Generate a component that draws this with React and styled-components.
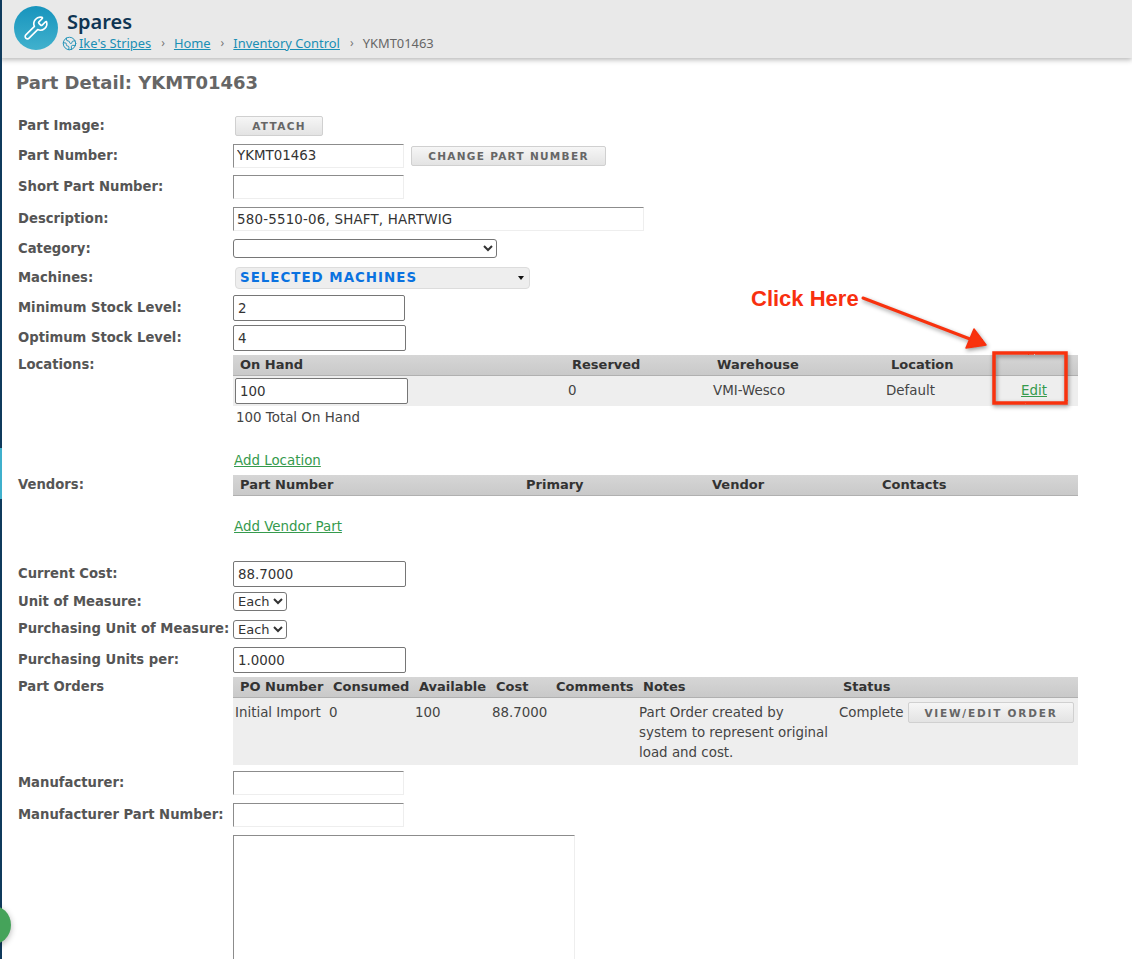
import React from "react";
import styled, { createGlobalStyle } from "styled-components";
import { Wrench, Earth } from "lucide-react";

const Global = createGlobalStyle`
  html, body { margin: 0; padding: 0; background: #fff; overflow: hidden; height: 959px; }
  #root { height: 959px; overflow: hidden; position: relative; }
`;

const Page = styled.div`
  position: relative;
  width: 1132px;
  height: 959px;
  overflow: hidden;
  font-family: "DejaVu Sans", Verdana, sans-serif;
  font-size: 13.4px;
  color: #444;
`;
const EdgeBar = styled.div`
  position: absolute;
  left: 0; top: 0; bottom: 0;
  width: 2px;
  z-index: 5;
  background: linear-gradient(to bottom, #0f3a5c 0, #0f3a5c 448px, #3fb0cc 448px, #3fb0cc 499px, #0f3a5c 499px);
`;
const HelpBubble = styled.div`
  position: absolute;
  left: -29px; top: 905px;
  width: 40px; height: 40px;
  border-radius: 50%;
  background: #45a35a;
  box-shadow: 0 2px 6px rgba(0,0,0,.3);
  z-index: 6;
`;
const Header = styled.header`
  height: 58px;
  background: #e9e9e9;
  box-shadow: 0 2px 5px rgba(0,0,0,.28);
  display: flex;
  align-items: flex-start;
  padding: 6px 0 0 14px;
  box-sizing: border-box;
  font-family: "Noto Sans", sans-serif;
`;
const Logo = styled.div`
  width: 44px; height: 44px;
  border-radius: 50%;
  background: linear-gradient(to bottom, #1794bd, #41b1cd);
  color: #fff;
  display: flex;
  align-items: center;
  justify-content: center;
  flex: none;
`;
const HeaderText = styled.div`
  margin-left: 4px;
  display: flex;
  flex-direction: column;
`;
const AppName = styled.div`
  font-size: 20px;
  line-height: 22px;
  margin: 5px 0 0 5px;
  font-weight: 600;
  color: #0f3553;
`;
const Crumbs = styled.nav`
  display: flex;
  align-items: center;
  font-size: 12.9px;
  line-height: 18px;
  margin-top: 1px;
  color: #666;
  svg { color: #1a8fb5; flex: none; margin-right: 2px; }
`;
const CrumbLink = styled.a`
  color: #1a8fb5;
  text-decoration: underline;
`;
const CrumbSep = styled.span`
  margin: 0 9px 0 10px;
  color: #777;
  font-size: 12px;
`;
const Title = styled.h1`
  margin: 14px 0 0 16px;
  font-size: 18px;
  line-height: 22px;
  font-weight: 700;
  color: #666;
`;
const Form = styled.div`
  margin-top: 18px;
  padding-left: 18px;
  width: 1060px;
`;
const Row = styled.div`
  display: grid;
  grid-template-columns: 215px 1fr;
  height: ${p => p.$h}px;
  align-items: ${p => p.$top ? "start" : "center"};
`;
const Label = styled.div`
  font-weight: 700;
  font-size: 13.2px;
  color: #555;
  white-space: nowrap;
  ${p => p.$pad ? `padding-top: ${p.$pad}px;` : "padding-bottom: 1px;"}
`;
const Field = styled.div`
  display: flex;
  align-items: center;
  gap: 7px;
`;
const Input = styled.input`
  box-sizing: border-box;
  width: ${p => p.$w}px;
  height: 26px;
  font: 13.4px "DejaVu Sans", sans-serif;
  letter-spacing: ${p => p.$ls || 0}px;
  color: #333;
  padding: 0 4px;
  margin: 0;
  outline: none;
  background: #fff;
  ${p => p.$soft
    ? `height: 24px; padding: 0 3px; border: 1px solid; border-color: #8c8c8c #eee #eee #8c8c8c;`
    : `border: 1px solid #767676; border-radius: 2px;`}
`;
const Textarea = styled.textarea`
  box-sizing: border-box;
  display: block;
  width: 342px;
  height: 200px;
  border: 1px solid;
  border-color: #8c8c8c #eee #eee #8c8c8c;
  outline: none;
  resize: none;
  margin: 4px 0 0;
`;
const Select = styled.select`
  box-sizing: border-box;
  width: ${p => p.$w}px;
  height: 19px;
  font: 13px "DejaVu Sans", sans-serif;
  color: #333;
  background: #fff;
  border: 1px solid #767676;
  border-radius: 3px;
  padding: 0;
  margin: 0;
`;
const Button = styled.button`
  box-sizing: border-box;
  width: ${p => p.$w}px;
  height: ${p => p.$bh || 20}px;
  margin: 0 0 0 ${p => p.$ml || 0}px;
  padding: 0;
  background: linear-gradient(to bottom, #f6f6f6, #e3e3e3);
  border: 1px solid #d0d0d0;
  border-radius: 2px;
  color: #666;
  font: 700 10.5px "DejaVu Sans", sans-serif;
  letter-spacing: ${p => p.$ls || 1.3}px;
  text-transform: uppercase;
  white-space: nowrap;
`;
const MachinePicker = styled.div`
  box-sizing: border-box;
  width: 295px;
  height: 22px;
  margin-left: 2px;
  background: #eeeeee;
  border: 1px solid #dcdcdc;
  border-radius: 4px;
  display: flex;
  align-items: center;
  justify-content: space-between;
  padding: 0 5px 0 4px;
  color: #0a72e0;
  font-weight: 700;
  font-size: 13.4px;
  letter-spacing: 1px;
`;
const Caret = styled.span`
  width: 0; height: 0;
  border-left: 3px solid transparent;
  border-right: 3px solid transparent;
  border-top: 4px solid #111;
`;
const TableHead = styled.div`
  display: grid;
  grid-template-columns: ${p => p.$cols};
  height: 21px;
  width: 845px;
  box-sizing: border-box;
  border-bottom: 1px solid #b0b0b0;
  background: linear-gradient(to bottom, #d6d6d6, #c9c9c9);
  align-items: center;
  font-weight: 700;
  font-size: 13px;
  color: #333;
  white-space: nowrap;
`;
const HeadCell = styled.div`
  padding: 0 0 2px ${p => p.$pl || 7}px;
`;
const TableRow = styled.div`
  display: grid;
  grid-template-columns: ${p => p.$cols};
  width: 845px;
  height: ${p => p.$h}px;
  background: #eeeeee;
  align-items: ${p => p.$top ? "start" : "center"};
  color: #444;
  line-height: 20px;
`;
const Cell = styled.div`
  padding-left: 2px;
  ${p => p.$center ? "text-align: center; padding-left: 0;" : ""}
  ${p => p.$pt ? `padding-top: ${p.$pt}px;` : ""}
  ${p => p.$wrap ? "white-space: normal; padding-right: 8px;" : "white-space: nowrap;"}
`;
const GreenLink = styled.a`
  color: #359a4d;
  text-decoration: underline;
`;
const Block = styled.div`
  height: ${p => p.$h}px;
  display: flex;
  align-items: ${p => p.$end ? "flex-end" : "center"};
  padding-left: ${p => p.$pl ?? 2}px;
`;
const Callout = styled.div`
  position: absolute;
  left: 751px; top: 287px;
  font: 700 22px/24px "Liberation Sans", Arial, sans-serif;
  color: #f8300f;
  z-index: 4;
  white-space: nowrap;
`;
const Overlay = styled.svg`
  position: absolute;
  left: 850px; top: 285px;
  z-index: 4;
  overflow: visible;
  filter: drop-shadow(1px 2px 2px rgba(0,0,0,.4));
`;

const locCols = "333px 145px 173px 106px 88px";
const venCols = "286px 186px 170px 203px";
const ordCols = "94px 86px 77px 60px 87px 200px 69px 172px";

export default function App() {
  return (
    <Page>
      <Global />
      <EdgeBar />
      <HelpBubble />
      <Header>
        <Logo><Wrench size={26} strokeWidth={1.5} /></Logo>
        <HeaderText>
          <AppName>Spares</AppName>
          <Crumbs>
            <Earth size={15} strokeWidth={1.5} />
            <CrumbLink>Ike's Stripes</CrumbLink>
            <CrumbSep>›</CrumbSep>
            <CrumbLink>Home</CrumbLink>
            <CrumbSep>›</CrumbSep>
            <CrumbLink>Inventory Control</CrumbLink>
            <CrumbSep>›</CrumbSep>
            <span>YKMT01463</span>
          </Crumbs>
        </HeaderText>
      </Header>
      <Title>Part Detail: YKMT01463</Title>
      <Form>
        <Row $h={28}>
          <Label>Part Image:</Label>
          <Field><Button $w={88} $ml={2}>Attach</Button></Field>
        </Row>
        <Row $h={31}>
          <Label>Part Number:</Label>
          <Field><Input $soft $w={171} readOnly value="YKMT01463" /><Button $w={195}>Change Part Number</Button></Field>
        </Row>
        <Row $h={32}>
          <Label>Short Part Number:</Label>
          <Field><Input $soft $w={171} readOnly value="" /></Field>
        </Row>
        <Row $h={32}>
          <Label>Description:</Label>
          <Field><Input $soft $w={411} $ls={0.2} readOnly value="580-5510-06, SHAFT, HARTWIG" /></Field>
        </Row>
        <Row $h={27}>
          <Label>Category:</Label>
          <Field><Select $w={264}><option></option></Select></Field>
        </Row>
        <Row $h={31}>
          <Label>Machines:</Label>
          <Field><MachinePicker>SELECTED MACHINES<Caret /></MachinePicker></Field>
        </Row>
        <Row $h={30}>
          <Label>Minimum Stock Level:</Label>
          <Field><Input $w={172} readOnly value="2" /></Field>
        </Row>
        <Row $h={30}>
          <Label>Optimum Stock Level:</Label>
          <Field><Input $w={173} readOnly value="4" /></Field>
        </Row>
        <Row $h={122} $top>
          <Label $pad={4}>Locations:</Label>
          <div>
            <Block $h={2} />
            <TableHead $cols={locCols}>
              <HeadCell>On Hand</HeadCell>
              <HeadCell $pl={6}>Reserved</HeadCell>
              <HeadCell $pl={6}>Warehouse</HeadCell>
              <HeadCell>Location</HeadCell>
              <HeadCell />
            </TableHead>
            <TableRow $h={30} $cols={locCols}>
              <Cell><Input $w={173} readOnly value="100" /></Cell>
              <Cell>0</Cell>
              <Cell>VMI-Wesco</Cell>
              <Cell>Default</Cell>
              <Cell $center><GreenLink>Edit</GreenLink></Cell>
            </TableRow>
            <Block $h={22} $pl={3}>100 Total On Hand</Block>
            <Block $h={40} $end $pl={1}><GreenLink>Add Location</GreenLink></Block>
          </div>
        </Row>
        <Row $h={85} $top>
          <Label $pad={2}>Vendors:</Label>
          <div>
            <TableHead $cols={venCols}>
              <HeadCell>Part Number</HeadCell>
              <HeadCell>Primary</HeadCell>
              <HeadCell>Vendor</HeadCell>
              <HeadCell>Contacts</HeadCell>
            </TableHead>
            <Block $h={38} $end $pl={1}><GreenLink>Add Vendor Part</GreenLink></Block>
          </div>
        </Row>
        <Row $h={28}>
          <Label>Current Cost:</Label>
          <Field><Input $w={173} readOnly value="88.7000" /></Field>
        </Row>
        <Row $h={27}>
          <Label>Unit of Measure:</Label>
          <Field><Select $w={54}><option>Each</option></Select></Field>
        </Row>
        <Row $h={28}>
          <Label>Purchasing Unit of Measure:</Label>
          <Field><Select $w={54}><option>Each</option></Select></Field>
        </Row>
        <Row $h={34}>
          <Label>Purchasing Units per:</Label>
          <Field><Input $w={173} readOnly value="1.0000" /></Field>
        </Row>
        <Row $h={90} $top>
          <Label $pad={2}>Part Orders</Label>
          <div>
            <TableHead $cols={ordCols}>
              <HeadCell>PO Number</HeadCell>
              <HeadCell $pl={6}>Consumed</HeadCell>
              <HeadCell $pl={6}>Available</HeadCell>
              <HeadCell $pl={6}>Cost</HeadCell>
              <HeadCell $pl={6}>Comments</HeadCell>
              <HeadCell $pl={6}>Notes</HeadCell>
              <HeadCell $pl={6}>Status</HeadCell>
              <HeadCell />
            </TableHead>
            <TableRow $h={67} $top $cols={ordCols}>
              <Cell $pt={5}>Initial Import</Cell>
              <Cell $pt={5}>0</Cell>
              <Cell $pt={5}>100</Cell>
              <Cell $pt={5}>88.7000</Cell>
              <Cell />
              <Cell $pt={5} $wrap>Part Order created by system to represent original load and cost.</Cell>
              <Cell $pt={5}>Complete</Cell>
              <Cell $pt={4}><Button $w={166} $bh={21} $ls={1.8}>View/Edit Order</Button></Cell>
            </TableRow>
          </div>
        </Row>
        <Row $h={32}>
          <Label>Manufacturer:</Label>
          <Field><Input $soft $w={171} readOnly value="" /></Field>
        </Row>
        <Row $h={32}>
          <Label>Manufacturer Part Number:</Label>
          <Field><Input $soft $w={171} readOnly value="" /></Field>
        </Row>
        <Row $h={200} $top>
          <div />
          <Textarea readOnly />
        </Row>
      </Form>
      <Callout>Click Here</Callout>
      <Overlay width="230" height="130" viewBox="0 0 230 130">
        <defs>
          <filter id="rough" x="-10%" y="-10%" width="120%" height="120%">
            <feTurbulence type="fractalNoise" baseFrequency="0.35" numOctaves="2" seed="4" />
            <feDisplacementMap in="SourceGraphic" scale="1.5" />
          </filter>
        </defs>
        <g filter="url(#rough)">
          <path d="M13 13 L120 54" fill="none" stroke="#f8300f" strokeWidth="3" strokeLinecap="round" />
          <path d="M124 44 L136 60 L116 63 Z" fill="#f8300f" stroke="#f8300f" strokeWidth="1.5" strokeLinejoin="round" />
          <rect x="144" y="68" width="72" height="50" fill="none" stroke="#f8300f" strokeWidth="3.5" />
        </g>
      </Overlay>
    </Page>
  );
}
